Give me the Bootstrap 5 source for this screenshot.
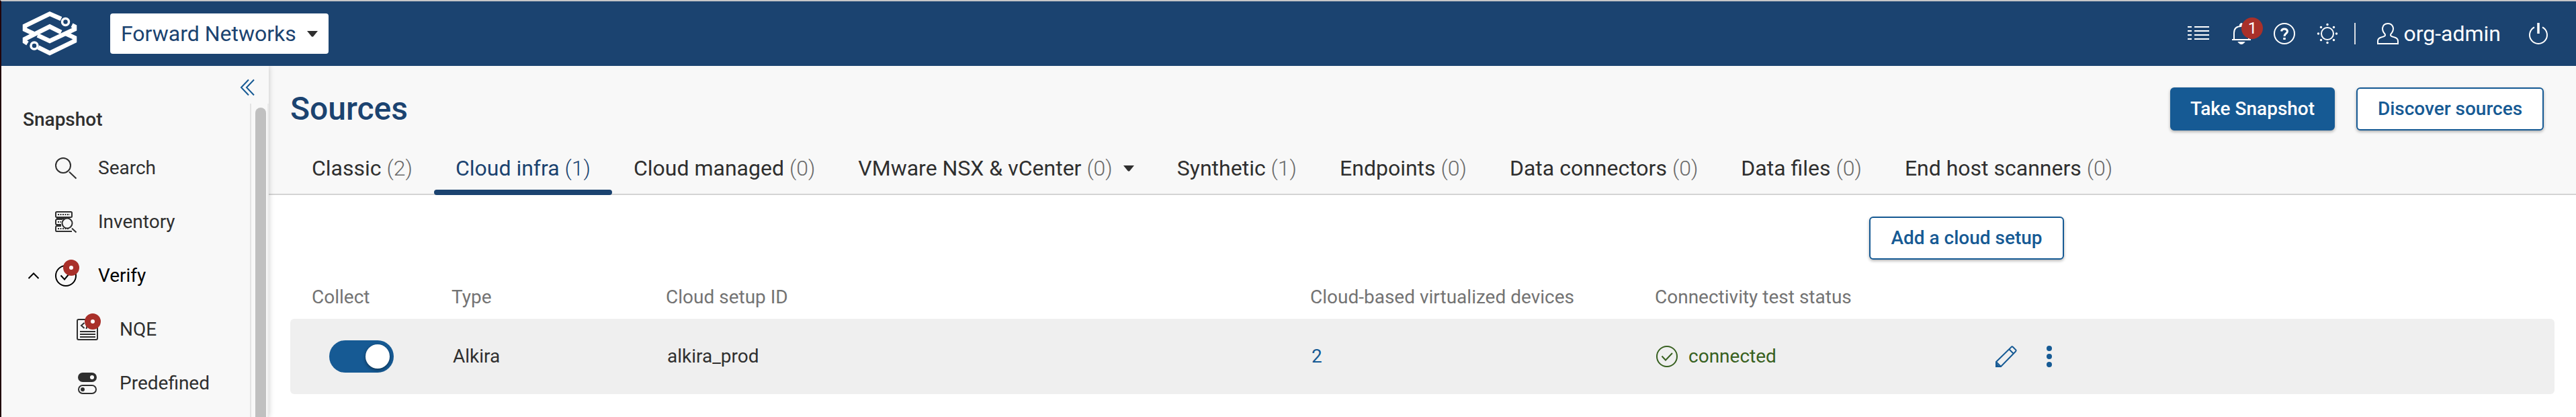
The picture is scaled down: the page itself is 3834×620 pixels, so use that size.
<!DOCTYPE html>
<html lang="en">
<head>
<meta charset="utf-8">
<title>Sources</title>
<link href="https://cdn.jsdelivr.net/npm/bootstrap@5.3.0/dist/css/bootstrap.min.css" rel="stylesheet">
<style>
:root{--navy:#1b4370;--blue:#165a94;--ink:#2f2f2f;--muted:#737373;--red:#a9302a;--green:#376020}
body{font-family:Roboto,sans-serif;font-size:28px;line-height:40px;color:var(--ink);background:#fff;height:620px;overflow:hidden;border-left:2px solid #21040a;border-top:2px solid #c6c6c8}
svg{display:block;flex:none;overflow:visible}
.topbar{height:96px;background:var(--navy);padding:0 42px 0 32px}
.org-select{width:325px;height:60px;margin-left:50px;padding:0 16px;border-radius:4px;background:#fff;color:var(--navy);font-size:32px}
.user-name{font-size:32px;color:#fff;margin-left:7px}
.alert-count{position:absolute;left:14px;top:-8px;width:32px;height:32px;border-radius:50%;background:var(--red);color:#fff;font-size:24px;line-height:32px;text-align:center}
.bar-sep{width:2px;height:32px;background:#d9dde2;margin-left:24px}
.frame{height:522px}
.side{width:398px;background:#f8f8f8;box-shadow:0 0 8px rgba(0,0,0,.22);z-index:1;clip-path:inset(0 -12px 0 0)}
.side-head{height:56px;padding:8px 22px 0 0}
.side-scroll{height:466px}
.side-list{width:370px;flex:none}
.side-track{width:28px;border-left:2px solid #e4e4e4;border-right:2px solid #ececec;padding:6px 4px 0 6px}
.side-thumb{height:480px;width:16px;border-radius:8px;background:#c0c0c0}
.side-title{height:48px;padding-left:32px;margin-bottom:8px;font-weight:500}
.side-item{height:80px;padding-left:80px}
.side-item.sub{padding-left:112px}
.side-item.open{padding-left:40px}
.side-item .lbl{margin-left:32px}
.dotmark{position:absolute;left:12px;top:-8px;width:24px;height:24px;border-radius:50%;border:9px solid var(--red);background:#fff}
.page-head{height:192px;background:#f8f8f8;border-bottom:2px solid #d4d4d4;padding-left:32px}
.page-title{font-size:48px;font-weight:500;line-height:64px;color:var(--navy)}
.act{height:64px;border-radius:6px;border:2px solid var(--blue);background:#fff;color:var(--blue);font-size:28px;font-weight:500;line-height:56px;padding:0;box-shadow:0 2px 4px rgba(0,0,0,.3)}
.act.solid{background:var(--blue);color:#fff}
.tabs .tab{height:68px;padding:0 32px;font-size:32px;line-height:56px;white-space:nowrap;margin-bottom:-2px;position:relative}
.tabs i{font-style:normal;font-weight:300;color:#6a6a6a}
.tabs .on,.tabs .on i{color:var(--navy)}
.tabs .on::after{content:"";position:absolute;left:0;right:0;bottom:0;height:8px;border-radius:4px;background:var(--navy)}
.grid-row{display:grid;grid-template-columns:208px 319px 959px 513px 507px auto;width:3370px;padding-left:32px;align-items:center}
.grid-head{height:56px;color:var(--muted);margin-top:28px}
.grid-line{height:112px;background:#efefef;border-radius:6px;margin-top:4px}
.toggle{width:96px;height:48px;border-radius:24px;background:var(--blue);margin-left:26px;padding:6px}
.knob{width:36px;height:36px;border-radius:50%;background:#fff;box-shadow:0 2px 5px rgba(0,0,0,.45)}
.cell{padding-left:2px}
</style>
</head>
<body>
<header class="topbar d-flex align-items-center">
  <svg width="80" height="66" viewBox="0 0 80 66" fill="none" stroke="#fff" stroke-width="6.5">
    <path d="M57 11L40 3.600 3 21.500V27L16 33M73 20.500L77 22.500V26.500L40 44 22 35.500"/>
    <path d="M64 33L77 39V44L40 62 23 53.500M7 47.500L3 45V41L40 22.500 57 31"/>
    <circle cx="63.500" cy="15.500" r="5" stroke-width="3.500"/><circle cx="17" cy="51" r="5" stroke-width="3.500"/>
  </svg>
  <div class="org-select d-flex align-items-center justify-content-between"><span>Forward Networks</span>
    <svg width="16" height="9" viewBox="0 0 16 9" fill="#2f2f2f"><path d="M0 0H16L9.500 8Q8 9.500 6.500 8Z"/></svg></div>
  <div class="d-flex align-items-center ms-auto">
    <svg width="32" height="26" viewBox="0 0 32 26" stroke="#fff" stroke-width="2"><path d="M0 3H6M10 3H32M0 9H6M10 9H32M0 15H6M10 15H32M0 21H6M10 21H32"/></svg>
    <div class="position-relative" style="margin-left:34px"><svg width="28" height="32" viewBox="0 0 28 32" fill="none" stroke="#fff" stroke-width="2"><path d="M0 25H28M3 25V15Q3 5 14 5T25 15V25"/><path d="M12 5V3Q14 -1 16 3V5ZM10.500 29H17.500Q14 33 10.500 29Z" fill="#fff"/></svg><span class="alert-count">1</span></div>
    <svg style="margin-left:34px" width="32" height="32" viewBox="0 0 32 32" fill="none" stroke="#fff" stroke-width="2"><circle cx="16" cy="16" r="15"/><path d="M11.500 12.500Q12 9 16 9T20.500 12.500C20.500 16 16 15.500 16 20" stroke-width="3"/><path d="M16 22V25" stroke-width="3.500"/></svg>
    <svg style="margin-left:32px" width="32" height="32" viewBox="0 0 32 32" fill="none" stroke="#fff" stroke-width="2"><circle cx="16" cy="16" r="9"/><path stroke-width="3.500" stroke-linecap="round" d="M16 2.500h0M16 29.500h0M2.500 16h0M29.500 16h0M6.500 6.500h0M25.500 6.500h0M6.500 25.500h0M25.500 25.500h0"/></svg>
    <div class="bar-sep"></div>
    <svg style="margin-left:32px" width="32" height="32" viewBox="0 0 32 32" fill="none" stroke="#fff" stroke-width="2"><path d="M1 31V27Q1 23 6 21.500C11 20 13 19.500 11.500 16.500Q8 13 8 8Q9 1 16 1T24 8Q24 13 20.500 16.500C19 19.500 21 20 26 21.500Q31 23 31 27V31Z"/></svg>
    <span class="user-name">org-admin</span>
    <svg style="margin-left:42px" width="28" height="32" viewBox="0 0 28 32" fill="none" stroke="#fff" stroke-width="2"><path d="M8 6.500A13 13 0 1 0 20 6.500"/><path d="M14 0V16" stroke-width="3.500"/></svg>
  </div>
</header>
<div class="frame d-flex">
  <aside class="side flex-shrink-0">
    <div class="side-head d-flex justify-content-end align-items-center">
      <svg width="20" height="24" viewBox="0 0 20 24" fill="none" stroke="#165a94" stroke-width="2"><path d="M12 0.500L1 12 12 23.500M20 0.500L9 12 20 23.500"/></svg>
    </div>
    <div class="side-scroll d-flex">
      <nav class="side-list">
        <div class="side-title d-flex align-items-center">Snapshot</div>
        <div class="side-item d-flex align-items-center">
          <svg width="32" height="32" viewBox="0 0 32 32" fill="none" stroke="#2f2f2f" stroke-width="2"><circle cx="12" cy="12" r="11"/><path d="M21 21.500L31.500 31.500"/></svg>
          <span class="lbl">Search</span></div>
        <div class="side-item d-flex align-items-center">
          <svg width="32" height="32" viewBox="0 0 32 32" fill="none" stroke="#2f2f2f" stroke-width="2"><rect x="1" y="1" width="24" height="8" rx="1.500"/><path d="M4 5H22M4 16H9M4 26H20" stroke-dasharray="2 1.500"/><path d="M25 30H2Q1 30 1 28V24Q1 22 3 22H9M9 20H2Q1 20 1 18V14Q1 12 3 12H11"/><path d="M2 10.500H14M2 21H9" stroke-width="3"/><circle cx="18" cy="18" r="7.500" fill="#f8f8f8"/><path d="M25 25.500L31.500 31.500"/></svg>
          <span class="lbl">Inventory</span></div>
        <div class="side-item open d-flex align-items-center text-black">
          <svg width="16" height="10" viewBox="0 0 16 10" fill="none" stroke="#000" stroke-width="2"><path d="M0.500 9L8 1.500 15.500 9"/></svg>
          <div class="position-relative" style="margin-left:24px"><svg width="32" height="32" viewBox="0 0 32 32" fill="none" stroke="#000" stroke-width="2"><circle cx="16" cy="16" r="15"/><path d="M8.500 15.500L14 21.500 21 13"/></svg><span class="dotmark"></span></div>
          <span class="lbl">Verify</span></div>
        <div class="side-item sub d-flex align-items-center">
          <div class="position-relative"><svg width="32" height="32" viewBox="0 0 32 32" fill="none" stroke="#2f2f2f" stroke-width="2"><rect x="1" y="1" width="30" height="30" rx="2"/><path d="M11.500 6L7 10 11.500 14M16 8L14.500 15M5 19H28M5 23H28M5 27H28"/></svg><span class="dotmark"></span></div>
          <span class="lbl">NQE</span></div>
        <div class="side-item sub d-flex align-items-center">
          <svg width="32" height="32" viewBox="0 0 32 32" fill="none" stroke="#2f2f2f" stroke-width="2"><rect x="3" y="1" width="26" height="12" rx="6" fill="#2f2f2f"/><rect x="3" y="19" width="26" height="12" rx="6"/><circle cx="23" cy="7" r="3" fill="#fff" stroke="none"/><circle cx="9" cy="25" r="3" fill="#2f2f2f" stroke="none"/></svg>
          <span class="lbl">Predefined</span></div>
      </nav>
      <div class="side-track overflow-hidden"><div class="side-thumb"></div></div>
    </div>
  </aside>
  <main class="flex-grow-1">
    <div class="page-head d-flex flex-column justify-content-between">
      <div class="d-flex align-items-start" style="padding-top:32px;padding-right:48px">
        <h1 class="page-title m-0">Sources</h1>
        <button class="act solid ms-auto" style="width:245px">Take Snapshot</button>
        <button class="act" style="width:279px;margin-left:32px">Discover sources</button>
      </div>
      <nav class="tabs d-flex">
        <div class="tab">Classic <i>(2)</i></div>
        <div class="tab on">Cloud infra <i>(1)</i></div>
        <div class="tab">Cloud managed <i>(0)</i></div>
        <div class="tab d-flex">VMware NSX &amp; vCenter&nbsp;<i>(0)</i><svg style="margin:24px 0 0 16px" width="16" height="9" viewBox="0 0 16 9" fill="#2f2f2f"><path d="M0 0H16L9.500 8Q8 9.500 6.500 8Z"/></svg></div>
        <div class="tab">Synthetic <i>(1)</i></div>
        <div class="tab">Endpoints <i>(0)</i></div>
        <div class="tab">Data connectors <i>(0)</i></div>
        <div class="tab">Data files <i>(0)</i></div>
        <div class="tab">End host scanners <i>(0)</i></div>
      </nav>
    </div>
    <section style="padding-left:32px;padding-top:32px">
      <div class="d-flex justify-content-end" style="width:2640px"><button class="act" style="width:290px">Add a cloud setup</button></div>
      <div class="grid-row grid-head"><span>Collect</span><span>Type</span><span>Cloud setup ID</span><span>Cloud-based virtualized devices</span><span>Connectivity test status</span></div>
      <div class="grid-row grid-line">
        <div><div class="toggle d-flex justify-content-end"><div class="knob"></div></div></div>
        <span class="cell">Alkira</span><span class="cell">alkira_prod</span><span class="cell" style="color:var(--blue)">2</span>
        <span class="cell d-flex align-items-center" style="color:var(--green)"><svg width="32" height="32" viewBox="0 0 32 32" fill="none" stroke="#376020" stroke-width="2"><circle cx="16" cy="16" r="15"/><path d="M8.500 15.500L14 21.500 24 11"/></svg><span style="margin-left:16px">connected</span></span>
        <span class="d-flex align-items-center"><svg width="32" height="32" viewBox="0 0 32 32" fill="none" stroke="#165a94" stroke-width="2"><path d="M1 31V24L24 1.500Q25 1 26 2L30.500 6.500Q31 7.500 30 8.500L8 31ZM20 5L27 12M1 24L8 31"/><path d="M1 27L5 31H1Z" fill="#165a94"/></svg>
        <svg style="margin-left:44px" width="8" height="32" viewBox="0 0 8 32" fill="#165a94"><circle cx="4" cy="4" r="4"/><circle cx="4" cy="16" r="4"/><circle cx="4" cy="28" r="4"/></svg></span>
      </div>
    </section>
  </main>
</div>
<script src="https://cdn.jsdelivr.net/npm/bootstrap@5.3.0/dist/js/bootstrap.bundle.min.js"></script>
</body>
</html>
